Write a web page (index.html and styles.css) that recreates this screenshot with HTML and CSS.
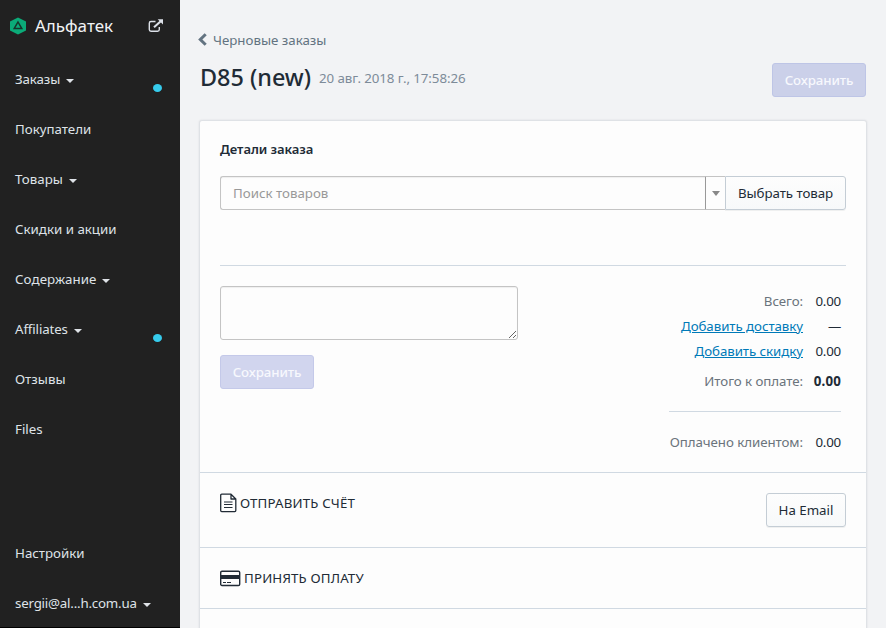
FILE: index.html
```html
<!DOCTYPE html>
<html lang="ru">
<head>
<meta charset="utf-8">
<title>D85 (new)</title>
<link rel="stylesheet" href="styles.css">
</head>
<body>
<div class="app">
  <aside class="sidebar">
    <header class="brand">
      <svg class="brand-logo" width="16" height="18" viewBox="0 0 16 18"><path fill="#0bab78" d="M8 .5l8 4v9l-8 4-8-4v-9z"/><path fill="none" stroke="#16352a" stroke-width="1.5" d="M8 5l3.8 6.6H4.2z"/></svg>
      <span class="brand-name">Альфатек</span>
      <svg class="brand-open" width="16" height="14" viewBox="0 0 16 14"><path fill="none" stroke="#dce1e8" stroke-width="1.4" d="M7.5 2.5H3A1.7 1.7 0 0 0 1.3 4.2v6.4A1.7 1.7 0 0 0 3 12.3h6.6a1.7 1.7 0 0 0 1.7-1.7V8"/><path fill="none" stroke="#dce1e8" stroke-width="2.1" d="M6 8.3l7-6.3"/><path fill="#dce1e8" d="M9.7.2H15v5.4z"/></svg>
    </header>
    <nav class="nav">
      <a class="nav-item"><span class="tight">Заказы</span><i class="caret"></i><b class="dot"></b></a>
      <a class="nav-item"><span>Покупатели</span></a>
      <a class="nav-item"><span>Товары</span><i class="caret"></i></a>
      <a class="nav-item"><span>Скидки и акции</span></a>
      <a class="nav-item"><span class="loose">Содержание</span><i class="caret"></i></a>
      <a class="nav-item"><span class="tight">Affiliates</span><i class="caret"></i><b class="dot"></b></a>
      <a class="nav-item"><span>Отзывы</span></a>
      <a class="nav-item"><span>Files</span></a>
    </nav>
    <nav class="nav nav-bottom">
      <a class="nav-item"><span>Настройки</span></a>
      <a class="nav-item"><span class="account">sergii@al...h.com.ua</span><i class="caret"></i></a>
    </nav>
  </aside>
  <main class="main">
    <a class="back"><svg width="9" height="13" viewBox="0 0 9 13"><path fill="none" stroke="#637381" stroke-width="3" d="M7.7 1.2L2.3 6.5l5.4 5.3"/></svg><span>Черновые заказы</span></a>
    <div class="title-row">
      <h1>D85 (new)</h1>
      <span class="date">20 авг. 2018 г., 17:58:26</span>
      <button class="btn primary title-save">Сохранить</button>
    </div>
    <section class="card">
      <div class="details">
        <h2>Детали заказа</h2>
        <div class="search">
          <input type="text" placeholder="Поиск товаров">
          <span class="drop"><i></i></span>
          <button class="btn plain choose">Выбрать товар</button>
        </div>
        <div class="summary">
          <div class="note">
            <textarea></textarea>
            <button class="btn primary">Сохранить</button>
          </div>
          <div class="totals">
            <div class="row"><span class="label">Всего:</span><span class="value">0.00</span></div>
            <div class="row"><a class="link">Добавить доставку</a><span class="value">—</span></div>
            <div class="row"><a class="link">Добавить скидку</a><span class="value">0.00</span></div>
            <div class="row grand"><span class="label">Итого к оплате:</span><span class="value">0.00</span></div>
            <div class="row paid"><span class="label">Оплачено клиентом:</span><span class="value">0.00</span></div>
          </div>
        </div>
      </div>
      <div class="action invoice">
        <svg width="17" height="20" viewBox="0 0 17 20"><path fill="none" stroke="#212b36" stroke-width="1.3" stroke-linejoin="round" d="M1.7 1.2h9.3l4.8 4.8v11.6a1 1 0 0 1-1 1H1.7a1 1 0 0 1-1-1V2.2a1 1 0 0 1 1-1zM11 1.2V6h4.8"/><path stroke="#212b36" d="M4 9h8.5M4 11.5h8.5M4 14.5h8.5" stroke-width="1.2"/></svg>
        <span>ОТПРАВИТЬ СЧЁТ</span>
        <button class="btn plain email">На Email</button>
      </div>
      <div class="action payment">
        <svg width="21" height="17" viewBox="0 0 21 17"><rect x=".7" y="1.2" width="19" height="14.3" rx="1.3" fill="none" stroke="#212b36" stroke-width="1.4"/><path fill="#212b36" d="M1 5h19v4H1z"/><path stroke="#212b36" stroke-width="1.2" d="M3 12.5h3M7 12.5h4"/></svg>
        <span>ПРИНЯТЬ ОПЛАТУ</span>
      </div>
    </section>
  </main>
</div>
</body>
</html>
```
FILE: styles.css
```css
* { box-sizing: border-box; }
body {
  margin: 0;
  background: #f2f3f5;
  color: #212b36;
  font: 13.3px/20px "Noto Sans", "Open Sans", sans-serif;
}
.app { display: flex; height: 628px; overflow: hidden; }
.sidebar {
  width: 180px;
  flex: none;
  display: flex;
  flex-direction: column;
  background: #212121;
  color: #dfe3e8;
  border-bottom: 1px solid #000;
}
.brand { display: flex; align-items: center; height: 54px; padding: 0 16px 3px 10px; }
.brand-name { margin-left: 9px; font-size: 17px; line-height: 24px; color: #f1f3f5; }
.brand-open { margin-left: auto; }
.nav-item { position: relative; display: flex; align-items: center; height: 50px; padding-left: 15px; white-space: nowrap; }
.nav-bottom { margin-top: auto; margin-bottom: -1px; }
.tight { letter-spacing: -.12px; }
.loose { letter-spacing: .1px; }
.account { letter-spacing: -.2px; }
.caret { margin: 3px 0 0 6px; border: 4px solid transparent; border-top-color: #dfe3e8; border-bottom: 0; }
.dot { position: absolute; left: 153px; top: 30px; width: 9px; height: 8px; border-radius: 50%; background: #36cbec; }
.main { flex: 1; min-width: 0; padding: 30px 19px 0; }
.back { display: flex; align-items: center; height: 20px; color: #637381; }
.back svg { margin: 0 6px 1px -1px; }
.title-row { display: flex; height: 70px; padding: 13px 1px 0; }
h1 { margin: -2px 0 0; font-size: 23.4px; line-height: 32px; font-weight: 500; }
.date { margin: 5px 0 0 8px; color: #7d8b99; letter-spacing: -.08px; }
.btn {
  height: 34px;
  padding: 0;
  border: 1px solid #c4cdd5;
  border-radius: 3px;
  font: inherit;
  color: #212b36;
  text-align: center;
  white-space: nowrap;
}
.primary { width: 94px; background: #d1d5ee; border-color: #c4c9e9; color: #f7f8fd; font-weight: 500; letter-spacing: -.1px; }
.title-save { margin-left: auto; background: #cbd0e9; border-color: #bec5e6; }
.plain { background: linear-gradient(#fdfdfd, #f7f9fa); box-shadow: 0 1px 0 rgba(22, 29, 37, .06); }
.card {
  height: 520px;
  background: #fdfdfd;
  border: 1px solid #dfe2e6;
  border-radius: 3px 3px 0 0;
  box-shadow: 0 0 2px rgba(50, 60, 70, .12);
}
.details { height: 351px; padding: 18px 20px 0; }
h2 { margin: 0 0 17px; font-size: 13px; line-height: 20px; font-weight: 600; letter-spacing: -.05px; }
.search { display: flex; height: 34px; }
input {
  flex: 1;
  min-width: 0;
  padding: 0 12px;
  border: 1px solid #c4c4c4;
  border-right-color: #999;
  border-radius: 3px 0 0 3px;
  background: #fdfdfd;
  font: inherit;
  box-shadow: inset 0 1px 1px rgba(0, 0, 0, .06);
}
input::placeholder { color: #999; opacity: 1; }
.drop { display: flex; align-items: center; justify-content: center; width: 19px; border: solid #c4c4c4; border-width: 1px 0; }
.drop i { border: 4px solid transparent; border-top: 5px solid #888; border-bottom: 0; }
.choose { width: 121px; border-radius: 0 3px 3px 0; letter-spacing: -.06px; }
.summary { display: flex; justify-content: space-between; margin-top: 55px; padding-top: 20px; border-top: 1px solid #d0d9e2; }
.note { width: 298px; }
textarea {
  display: block;
  width: 298px;
  height: 54px;
  margin-bottom: 15px;
  border: 1px solid #c4c4c4;
  border-radius: 3px;
  background: #fdfdfd;
  box-shadow: inset 0 1px 1px rgba(0, 0, 0, .06);
}
.totals { width: 172px; margin-right: 5px; padding-top: 3px; }
.row { display: flex; justify-content: flex-end; height: 25px; line-height: 25px; white-space: nowrap; letter-spacing: -.06px; }
.label { color: #6b747c; }
.link { color: #007ab8; text-decoration: underline; }
.value { width: 38px; text-align: right; letter-spacing: -.2px; }
.grand { height: 48px; padding-top: 5px; border-bottom: 1px solid #d0d9e2; }
.grand .value { font-weight: 700; letter-spacing: .2px; }
.paid { margin-top: 18px; }
.action { display: flex; align-items: flex-start; padding: 20px 20px 0; border-top: 1px solid #d0d9e2; }
.invoice { height: 75px; }
.action svg { flex: none; }
.action span { margin-left: 3px; letter-spacing: .17px; }
.email { width: 80px; margin-left: auto; }
.payment { height: 62px; border-bottom: 1px solid #d0d9e2; }
.payment svg { margin-top: 2px; }
```
